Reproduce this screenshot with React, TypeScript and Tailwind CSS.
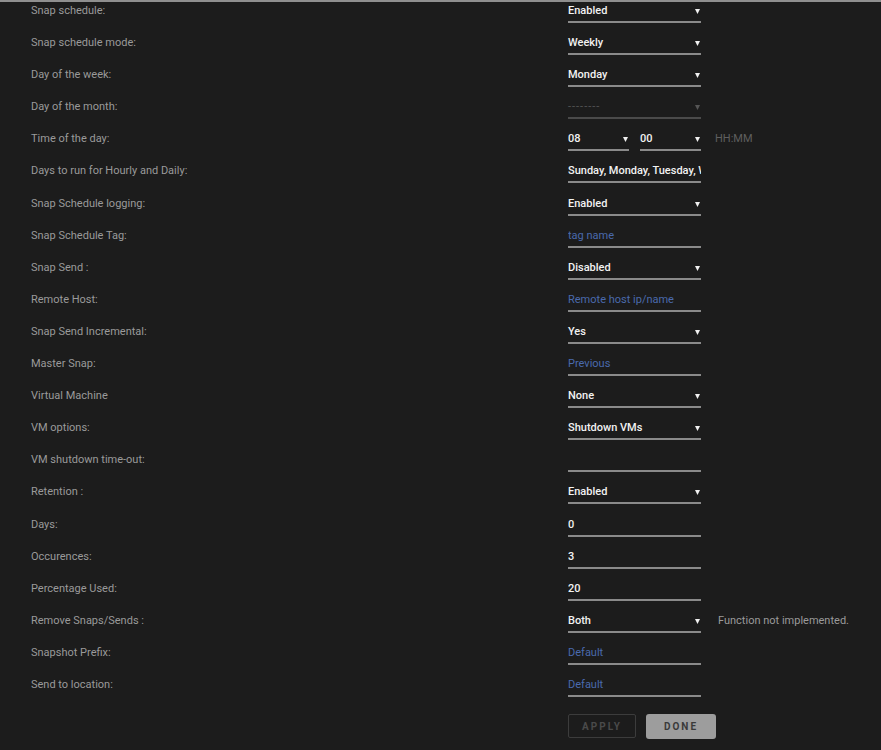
import React from 'react';

type Row = {
  label: string;
  kind: 'select' | 'input' | 'time' | 'disabled';
  value?: string;
  placeholder?: string;
  note?: string;
};

const rows: Row[] = [
  { label: 'Snap schedule:', kind: 'select', value: 'Enabled' },
  { label: 'Snap schedule mode:', kind: 'select', value: 'Weekly' },
  { label: 'Day of the week:', kind: 'select', value: 'Monday' },
  { label: 'Day of the month:', kind: 'disabled', value: '--------' },
  { label: 'Time of the day:', kind: 'time' },
  { label: 'Days to run for Hourly and Daily:', kind: 'input', value: 'Sunday, Monday, Tuesday, Wednesday, Thursday, Friday, Saturday' },
  { label: 'Snap Schedule logging:', kind: 'select', value: 'Enabled' },
  { label: 'Snap Schedule Tag:', kind: 'input', placeholder: 'tag name' },
  { label: 'Snap Send :', kind: 'select', value: 'Disabled' },
  { label: 'Remote Host:', kind: 'input', placeholder: 'Remote host ip/name' },
  { label: 'Snap Send Incremental:', kind: 'select', value: 'Yes' },
  { label: 'Master Snap:', kind: 'input', placeholder: 'Previous' },
  { label: 'Virtual Machine', kind: 'select', value: 'None' },
  { label: 'VM options:', kind: 'select', value: 'Shutdown VMs' },
  { label: 'VM shutdown time-out:', kind: 'input', value: '' },
  { label: 'Retention :', kind: 'select', value: 'Enabled' },
  { label: 'Days:', kind: 'input', value: '0' },
  { label: 'Occurences:', kind: 'input', value: '3' },
  { label: 'Percentage Used:', kind: 'input', value: '20' },
  { label: 'Remove Snaps/Sends :', kind: 'select', value: 'Both', note: 'Function not implemented.' },
  { label: 'Snapshot Prefix:', kind: 'input', placeholder: 'Default' },
  { label: 'Send to location:', kind: 'input', placeholder: 'Default' },
];

function Caret({ dim = false }: { dim?: boolean }) {
  return (
    <svg width="5" height="5" viewBox="0 0 5 5" className="shrink-0">
      <path d="M0 0 H5 L2.5 5 Z" fill={dim ? '#555555' : '#f0f0f0'} />
    </svg>
  );
}

function Select({ value, width = 'w-[133px]', dim = false }: { value: string; width?: string; dim?: boolean }) {
  return (
    <div
      className={`${width} h-[21px] flex items-start justify-between pr-[1px] border-b-2 ${
        dim ? 'border-[#4a4a4a]' : 'border-[#8a8a8a]'
      }`}
    >
      <span className={`pt-[1px] leading-4 ${dim ? 'text-[#555555] tracking-[1px]' : 'text-[#f2f2f2] font-medium'}`}>
        {value}
      </span>
      <span className="pt-[7px]">
        <Caret dim={dim} />
      </span>
    </div>
  );
}

function Input({ value, placeholder }: { value?: string; placeholder?: string }) {
  return (
    <div className="w-[133px] h-[21px] pt-[1px] border-b-2 border-[#8a8a8a] overflow-hidden whitespace-nowrap">
      {value ? (
        <span className="leading-4 text-[#f2f2f2] font-medium">{value}</span>
      ) : (
        <span className="leading-4 text-[#4a6aad]">{placeholder}</span>
      )}
    </div>
  );
}

export default function App() {
  return (
    <div
      className="min-h-[750px] bg-[#1c1c1c] text-[11px] text-[#9a9a9a]"
      style={{ fontFamily: 'Roboto, "Liberation Sans", sans-serif' }}
    >
      <div className="h-[2px] bg-[#8f8f8f]" />

      <div className="pl-[31px]">
        {rows.map((row) => (
          <div key={row.label} className="h-[32.1px] flex items-start">
            <div className="w-[537px] pt-[1px] leading-4">{row.label}</div>

            {row.kind === 'select' && <Select value={row.value ?? ''} />}
            {row.kind === 'disabled' && <Select value={row.value ?? ''} dim />}
            {row.kind === 'input' && <Input value={row.value} placeholder={row.placeholder} />}
            {row.kind === 'time' && (
              <>
                <div className="flex gap-[11px]">
                  <Select value="08" width="w-[61px]" />
                  <Select value="00" width="w-[61px]" />
                </div>
                <span className="ml-[14px] pt-[1px] leading-4 text-[#5f5f5f]">HH:MM</span>
              </>
            )}

            {row.note && <span className="ml-[17px] pt-[1px] leading-4 text-[#9a9a9a]">{row.note}</span>}
          </div>
        ))}

        {/* Buttons */}
        <div className="flex gap-[10px] ml-[537px] mt-[6px]">
          <button className="w-[68px] h-[24px] rounded-[2px] border border-[#3c3c3c] text-[10px] font-bold tracking-[0.2em] text-[#4a4a4a]">
            APPLY
          </button>
          <button className="w-[70px] h-[25px] rounded-[3px] bg-[#9d9d9d] text-[10px] font-bold tracking-[0.2em] text-[#3a3a3a]">
            DONE
          </button>
        </div>
      </div>
    </div>
  );
}
